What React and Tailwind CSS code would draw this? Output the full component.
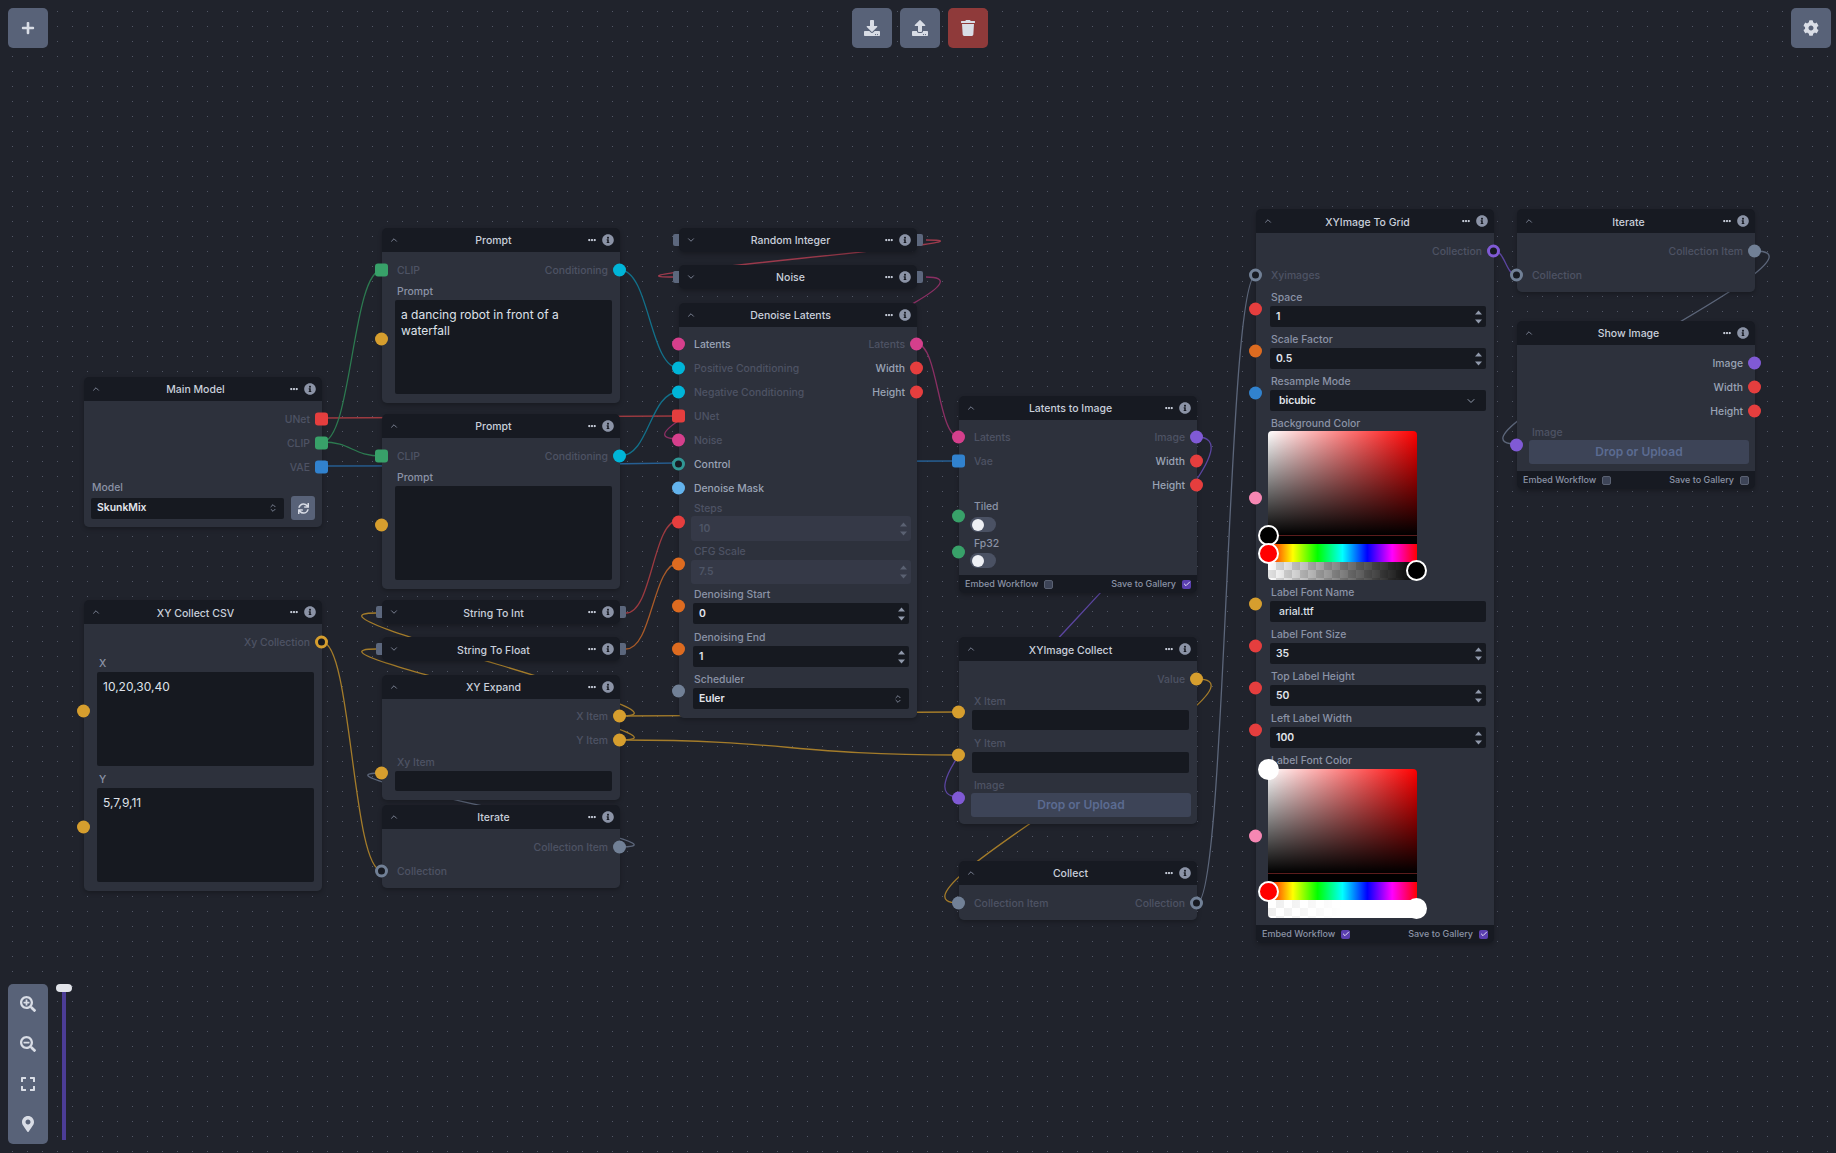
import React from 'react';
import clsx from 'clsx';
import { Check, ChevronDown, ChevronUp, ChevronsUpDown } from 'lucide-react';
import {
  FaCog,
  FaDownload,
  FaEllipsisH,
  FaExpand,
  FaInfoCircle,
  FaMapMarkerAlt,
  FaPlus,
  FaSearchMinus,
  FaSearchPlus,
  FaSync,
  FaTrash,
  FaUpload,
} from 'react-icons/fa';

const PINK = 'bg-[#d53f8c]';
const CYAN = 'bg-[#00b5d8]';
const RED = 'bg-[#e53e3e]';
const GREEN = 'bg-[#38a169]';
const BLUE = 'bg-[#3182ce]';
const ORANGE = 'bg-[#dd6b20]';
const YELLOW = 'bg-[#d69e2e]';
const PURPLE = 'bg-[#805ad5]';
const GRAY = 'bg-[#718096]';
const SKY = 'bg-[#63b3ed]';
const ROSE = 'bg-[#f687b3]';
const RING_GRAY = 'bg-[#171a22] border-[3px] border-[#718096]';
const RING_YELLOW = 'bg-[#171a22] border-[3px] border-[#d69e2e]';
const RING_PURPLE = 'bg-[#171a22] border-[3px] border-[#805ad5]';
const RING_TEAL = 'bg-[#171a22] border-[3px] border-[#319795]';

// same curve the node editor draws between two handles
function edgePath(sx, sy, tx, ty) {
  const d = tx - sx;
  const c = d >= 0 ? 0.5 * d : 6.25 * Math.sqrt(-d);
  return `M${sx},${sy} C${sx + c},${sy} ${tx - c},${ty} ${tx},${ty}`;
}

const EDGES = [
  [322, 418, 679, 416, '#9c3a40'],
  [322, 442, 382, 270, '#2c7a50'],
  [322, 442, 382, 456, '#2c7a50'],
  [322, 466, 959, 461, '#265f93'],
  [620, 270, 679, 368, '#12708a'],
  [620, 456, 679, 392, '#12708a'],
  [926, 240, 673, 277, '#9c3a4c'],
  [926, 277, 679, 439, '#8a2f63'],
  [917, 344, 959, 437, '#8a2f63'],
  [1197, 437, 959, 797, '#5b45a0'],
  [620, 716, 959, 712, '#a47c2a'],
  [620, 740, 959, 755, '#a47c2a'],
  [1197, 679, 959, 903, '#a47c2a'],
  [1197, 903, 1256, 275, '#5c667a'],
  [1494, 251, 1517, 275, '#5b45a0'],
  [1755, 251, 1517, 444, '#5c667a'],
  [322, 642, 382, 871, '#a47c2a'],
  [620, 847, 382, 773, '#5c667a'],
  [620, 716, 376, 613, '#a47c2a'],
  [620, 740, 376, 649, '#a47c2a'],
  [626, 613, 679, 520, '#9c3a40'],
  [626, 649, 679, 563, '#a85a28'],
];

function Handle({ side, color, square, className }) {
  return (
    <span
      className={clsx(
        'absolute z-10 size-[13px] -translate-y-1/2',
        side === 'left' ? '-left-[7px]' : '-right-[6px]',
        square ? 'rounded-[3px]' : 'rounded-full',
        color,
        className || 'top-1/2'
      )}
    />
  );
}

function Node({ className, title, collapsed, footer, children, bodyClass, titleClass }) {
  return (
    <div className={clsx('absolute w-[238px] rounded-[5px] shadow-[0_2px_4px_rgba(0,0,0,0.25)]', className)}>
      <div
        className={clsx(
          'relative flex h-6 items-center gap-1 bg-[#171a22] pl-[7px] pr-[6px]',
          collapsed ? 'rounded-[5px]' : 'rounded-t-[5px]'
        )}
      >
        {collapsed ? (
          <>
            <span className="absolute -left-[6px] top-[6px] h-3 w-[6px] rounded-l-[2px] bg-[#5c677d]" />
            <span className="absolute -right-[6px] top-[6px] h-3 w-[6px] rounded-r-[2px] bg-[#5c677d]" />
            <ChevronDown size={10} className="text-[#8b93a6]" />
          </>
        ) : (
          <ChevronUp size={10} className="text-[#8b93a6]" />
        )}
        <div className={clsx('flex-1 text-center text-[10.5px] font-medium text-[#c9cfdb]', titleClass || 'pt-[2px]')}>
          {title}
        </div>
        <FaEllipsisH size={8} className="text-[#c9cfdb]" />
        <FaInfoCircle size={12} className="ml-[2px] text-[#8b93a6]" />
      </div>
      {!collapsed && (
        <div className={clsx('bg-[#2d313c] pt-[6px]', footer ? '' : 'rounded-b-[5px]', bodyClass)}>{children}</div>
      )}
      {footer}
    </div>
  );
}

function Row({ left, right }) {
  return (
    <div className="relative flex h-6 items-center justify-between pl-[15px] pr-3 pt-[2px] text-[10.4px] font-medium">
      {left ? (
        <>
          <Handle side="left" color={left.color} square={left.square} />
          <span className={left.lit ? 'text-[#9aa3b5]' : 'text-[#4e5364]'}>{left.label}</span>
        </>
      ) : (
        <span />
      )}
      {right && (
        <>
          <span className={right.lit ? 'text-[#9aa3b5]' : 'text-[#4e5364]'}>{right.label}</span>
          <Handle side="right" color={right.color} square={right.square} />
        </>
      )}
    </div>
  );
}

function Field({ label, color, dim, labelClass, className, children }) {
  return (
    <div className={clsx('relative pl-[14px] pr-2', className)}>
      {color && <Handle side="left" color={color} className="top-[calc(50%+1px)]" />}
      <div
        className={clsx(
          'flex items-center pl-px pt-[2px] text-[10.4px] font-medium',
          labelClass || 'h-[18px]',
          dim ? 'text-[#4e5364]' : 'text-[#8b93a6]'
        )}
      >
        {label}
      </div>
      {children}
    </div>
  );
}

function Stepper({ dim }) {
  return (
    <svg width="7" height="15" viewBox="0 0 7 15" className="absolute right-1 top-1/2 -translate-y-1/2">
      <path d="M3.5 1 L7 5 L0 5 Z" fill={dim ? '#5a6172' : '#9099ab'} />
      <path d="M0 10 L7 10 L3.5 14 Z" fill={dim ? '#5a6172' : '#9099ab'} />
    </svg>
  );
}

function NumberInput({ value }) {
  return (
    <div className="relative flex h-[21px] items-center rounded-[2px] bg-[#161920] pl-[6px] text-[10.4px] font-semibold text-[#e2e5ec]">
      {value}
      <Stepper />
    </div>
  );
}

function DimInput({ value, className }) {
  return (
    <div
      className={clsx(
        '-mx-[2px] relative flex items-center rounded-[3px] bg-[#353947] pl-2 text-[10.4px] font-semibold text-[#4e5566]',
        className
      )}
    >
      {value}
      <Stepper dim />
    </div>
  );
}

function Select({ value, className, children }) {
  return (
    <div
      className={clsx(
        'flex items-center justify-between rounded-[2px] bg-[#161920] text-[10.4px] font-semibold text-[#e2e5ec]',
        className
      )}
    >
      {value}
      {children}
    </div>
  );
}

function TextArea({ children }) {
  return (
    <div className="-ml-px h-[94px] rounded-[2px] bg-[#161920] px-[6px] pt-[7px] text-[12px] leading-4 text-[#dfe2ea]">
      {children}
    </div>
  );
}

function Blank({ className }) {
  return <div className={clsx('-ml-px rounded-[2px] bg-[#161920]', className)} />;
}

function Upload() {
  return (
    <div className="-ml-[2px] -mr-[2px] flex h-6 items-center justify-center rounded-[3px] bg-[#3d4457] text-[12px] font-semibold text-[#5b6b91]">
      Drop or Upload
    </div>
  );
}

function Toggle() {
  return (
    <div className="-ml-[3px] flex h-[15px] w-[26px] items-center rounded-full bg-[#4a5163] pl-[2px]">
      <span className="size-3 rounded-full bg-[#eef0f5]" />
    </div>
  );
}

function Box({ on }) {
  return (
    <span
      className={clsx(
        'flex size-[9px] items-center justify-center rounded-[2px]',
        on ? 'bg-[#5b3fb0]' : 'border border-[#5a6172] bg-[#3d4457]'
      )}
    >
      {on && <Check size={8} strokeWidth={2.5} className="text-white" />}
    </span>
  );
}

function Footer({ embed, save }) {
  return (
    <div className="flex h-[18px] items-center justify-between rounded-b-[5px] bg-[#171a22] px-[6px] text-[9px] font-medium text-[#8b93a6]">
      <div className="flex items-center gap-[6px]">
        Embed Workflow <Box on={embed} />
      </div>
      <div className="flex items-center gap-[6px]">
        Save to Gallery <Box on={save} />
      </div>
    </div>
  );
}

function Picker({ alphaClass, alphaThumb, pickThumb }) {
  return (
    <div className="relative -ml-[2px] h-[149px] w-[149px]">
      <div className="h-[104px] rounded-t-[4px] bg-[linear-gradient(to_top,#000,transparent),linear-gradient(to_right,#fff,#f00)]" />
      <div className="h-[9px] border-t border-[#5a1c1c] bg-black" />
      <div className="h-[18px] bg-[linear-gradient(to_right,#f00,#ff0,#0f0,#0ff,#00f,#f0f,#f00)]" />
      <div className="h-[18px] rounded-b-[4px] bg-[repeating-conic-gradient(#e2e2e2_0_25%,#fff_0_50%)] bg-[size:16px_16px]">
        <div className={clsx('h-full rounded-b-[4px]', alphaClass)} />
      </div>
      <span className={clsx('absolute -left-[10px] size-[21px] rounded-full', pickThumb)} />
      <span className="absolute -left-[10px] top-[112px] size-[21px] rounded-full border-2 border-white bg-[#f00]" />
      <span className={clsx('absolute -right-[10px] top-[129px] size-[21px] rounded-full', alphaThumb)} />
    </div>
  );
}

function ToolButton({ className, children }) {
  return (
    <button className={clsx('flex size-10 items-center justify-center rounded-[5px] text-[#d9dde6]', className)}>
      {children}
    </button>
  );
}

function PromptNode({ className, text }) {
  return (
    <Node title="Prompt" className={className} bodyClass="pb-[9px]">
      <Row left={{ label: 'CLIP', color: GREEN, square: true }} right={{ label: 'Conditioning', color: CYAN }} />
      <Field label="Prompt" color={YELLOW}>
        <TextArea>{text}</TextArea>
      </Field>
    </Node>
  );
}

export default function App() {
  return (
    <div className="relative h-[1153px] w-[1836px] overflow-hidden bg-[#20232c] bg-[radial-gradient(#525766_0.7px,transparent_1px)] bg-[size:15px_15px] bg-[position:5px_4px] font-[Inter,sans-serif]">
      <svg className="absolute inset-0" width="1836" height="1153" fill="none">
        {EDGES.map(([sx, sy, tx, ty, color], i) => (
          <path key={i} d={edgePath(sx, sy, tx, ty)} stroke={color} strokeWidth="1.3" />
        ))}
      </svg>

      <Node title="Main Model" className="left-[84px] top-[377px]">
        <Row right={{ label: 'UNet', color: RED, square: true }} />
        <Row right={{ label: 'CLIP', color: GREEN, square: true }} />
        <Row right={{ label: 'VAE', color: BLUE, square: true }} />
        <div className="px-[7px] pb-[7px] pt-0">
          <div className="flex h-[17px] items-center pl-px text-[10.4px] font-medium text-[#8b93a6]">Model</div>
          <div className="flex items-center gap-[7px]">
            <Select value="SkunkMix" className="h-[21px] w-[194px] pl-[6px] pr-[6px]">
              <ChevronsUpDown size={10} className="text-[#8b93a6]" />
            </Select>
            <button className="flex size-6 items-center justify-center rounded-[3px] bg-[#586278] text-[#d9dde6]">
              <FaSync size={11} />
            </button>
          </div>
        </div>
      </Node>

      <PromptNode className="left-[382px] top-[228px]" text="a dancing robot in front of a waterfall" />
      <PromptNode className="left-[382px] top-[414px]" />

      <Node title="Random Integer" collapsed className="left-[679px] top-[228px]" />
      <Node title="Noise" collapsed className="left-[679px] top-[265px]" />

      <Node title="Denoise Latents" className="left-[679px] top-[303px]" bodyClass="pb-[9px] !pt-[5px]">
        <Row left={{ label: 'Latents', color: PINK, lit: true }} right={{ label: 'Latents', color: PINK }} />
        <Row left={{ label: 'Positive Conditioning', color: CYAN }} right={{ label: 'Width', color: RED, lit: true }} />
        <Row left={{ label: 'Negative Conditioning', color: CYAN }} right={{ label: 'Height', color: RED, lit: true }} />
        <Row left={{ label: 'UNet', color: RED, square: true }} />
        <Row left={{ label: 'Noise', color: PINK }} />
        <Row left={{ label: 'Control', color: RING_TEAL, lit: true }} />
        <Row left={{ label: 'Denoise Mask', color: SKY, lit: true }} />
        <Field label="Steps" dim color={RED} labelClass="h-4">
          <DimInput value="10" className="h-[25px]" />
        </Field>
        <Field label="CFG Scale" dim color={ORANGE} labelClass="h-[19px]">
          <DimInput value="7.5" className="h-6" />
        </Field>
        <Field label="Denoising Start" color={ORANGE} className="mt-[1px]">
          <NumberInput value="0" />
        </Field>
        <Field label="Denoising End" color={ORANGE} className="mt-1">
          <NumberInput value="1" />
        </Field>
        <Field label="Scheduler" color={GRAY} className="mt-[3px]">
          <Select value="Euler" className="h-[21px] pl-[6px] pr-[6px]">
            <ChevronsUpDown size={10} className="text-[#8b93a6]" />
          </Select>
        </Field>
      </Node>

      <Node
        title="Latents to Image"
        className="left-[959px] top-[396px]"
        bodyClass="!pt-[5px] pb-[7px]"
        footer={<Footer save />}
      >
        <Row left={{ label: 'Latents', color: PINK }} right={{ label: 'Image', color: PURPLE }} />
        <Row left={{ label: 'Vae', color: BLUE, square: true }} right={{ label: 'Width', color: RED, lit: true }} />
        <Row right={{ label: 'Height', color: RED, lit: true }} />
        <Field label="Tiled" color={GREEN}>
          <div className="pt-[2px]">
            <Toggle />
          </div>
        </Field>
        <Field label="Fp32" color={GREEN} className="mt-[2px]">
          <div className="pt-px">
            <Toggle />
          </div>
        </Field>
      </Node>

      <Node title="XYImage Collect" titleClass="pt-[4px]" className="left-[959px] top-[637px]" bodyClass="pb-[7px]">
        <Row right={{ label: 'Value', color: YELLOW }} />
        <Field label="X Item" dim color={YELLOW} labelClass="h-[19px]">
          <Blank className="h-5" />
        </Field>
        <Field label="Y Item" dim color={YELLOW} className="mt-1">
          <Blank className="h-[21px]" />
        </Field>
        <Field label="Image" dim color={PURPLE} labelClass="h-[17px]" className="mt-[3px]">
          <Upload />
        </Field>
      </Node>

      <Node title="Collect" className="left-[959px] top-[861px]" bodyClass="pb-[5px]">
        <Row left={{ label: 'Collection Item', color: GRAY }} right={{ label: 'Collection', color: RING_GRAY }} />
      </Node>

      <Node title="XY Collect CSV" titleClass="pt-[4px]" className="left-[84px] top-[600px]" bodyClass="pb-[9px]">
        <Row right={{ label: 'Xy Collection', color: RING_YELLOW }} />
        <Field label="X" color={YELLOW}>
          <TextArea>10,20,30,40</TextArea>
        </Field>
        <Field label="Y" color={YELLOW} className="mt-1">
          <TextArea>5,7,9,11</TextArea>
        </Field>
      </Node>

      <Node title="String To Int" titleClass="pt-[4px]" collapsed className="left-[382px] top-[600px]" />
      <Node title="String To Float" titleClass="pt-[4px]" collapsed className="left-[382px] top-[637px]" />

      <Node title="XY Expand" className="left-[382px] top-[675px]" bodyClass="!pt-[5px] pb-[9px]">
        <Row right={{ label: 'X Item', color: YELLOW }} />
        <Row right={{ label: 'Y Item', color: YELLOW }} />
        <Field label="Xy Item" dim color={YELLOW} labelClass="h-[19px]">
          <Blank className="h-5" />
        </Field>
      </Node>

      <Node title="Iterate" className="left-[382px] top-[805px]" bodyClass="pb-[5px]">
        <Row right={{ label: 'Collection Item', color: GRAY }} />
        <Row left={{ label: 'Collection', color: RING_GRAY }} />
      </Node>

      <Node
        title="XYImage To Grid"
        titleClass="pt-[4px]"
        className="left-[1256px] top-[209px]"
        bodyClass="pb-[7px]"
        footer={<Footer embed save />}
      >
        <Row right={{ label: 'Collection', color: RING_PURPLE }} />
        <Row left={{ label: 'Xyimages', color: RING_GRAY }} />
        <div className="mt-px flex flex-col gap-[3px]">
          <Field label="Space" color={RED}>
            <NumberInput value="1" />
          </Field>
          <Field label="Scale Factor" color={ORANGE}>
            <NumberInput value="0.5" />
          </Field>
          <Field label="Resample Mode" color={BLUE}>
            <Select value="bicubic" className="h-[21px] pl-[9px] pr-[9px]">
              <ChevronDown size={12} className="text-[#9099ab]" />
            </Select>
          </Field>
          <Field label="Background Color" color={ROSE} labelClass="h-[17px]">
            <Picker
              alphaClass="bg-[linear-gradient(to_right,transparent,#000)]"
              alphaThumb="border-2 border-white bg-black"
              pickThumb="top-[94px] border-2 border-white bg-black"
            />
          </Field>
          <Field label="Label Font Name" color={YELLOW}>
            <div className="flex h-[21px] items-center rounded-[2px] bg-[#161920] pl-[9px] text-[10.4px] font-medium text-[#dfe2ea]">
              arial.ttf
            </div>
          </Field>
          <Field label="Label Font Size" color={RED}>
            <NumberInput value="35" />
          </Field>
          <Field label="Top Label Height" color={RED}>
            <NumberInput value="50" />
          </Field>
          <Field label="Left Label Width" color={RED}>
            <NumberInput value="100" />
          </Field>
          <Field label="Label Font Color" color={ROSE}>
            <Picker
              alphaClass="bg-[linear-gradient(to_right,rgba(255,255,255,0.4),#fff_50%)]"
              alphaThumb="bg-white"
              pickThumb="-top-[10px] bg-white"
            />
          </Field>
        </div>
      </Node>

      <Node title="Iterate" titleClass="pt-[4px]" className="left-[1517px] top-[209px]" bodyClass="pb-[5px]">
        <Row right={{ label: 'Collection Item', color: GRAY }} />
        <Row left={{ label: 'Collection', color: RING_GRAY }} />
      </Node>

      <Node title="Show Image" className="left-[1517px] top-[321px]" bodyClass="pb-[7px]" footer={<Footer />}>
        <Row right={{ label: 'Image', color: PURPLE, lit: true }} />
        <Row right={{ label: 'Width', color: RED, lit: true }} />
        <Row right={{ label: 'Height', color: RED, lit: true }} />
        <Field label="Image" dim color={PURPLE} labelClass="h-[17px]">
          <Upload />
        </Field>
      </Node>

      <ToolButton className="absolute left-2 top-2 bg-[#586278]">
        <FaPlus size={14} />
      </ToolButton>

      <div className="absolute left-[852px] top-2 flex gap-2">
        <ToolButton className="bg-[#586278]">
          <FaDownload size={16} />
        </ToolButton>
        <ToolButton className="bg-[#586278]">
          <FaUpload size={16} />
        </ToolButton>
        <ToolButton className="bg-[#8f3a3a]">
          <FaTrash size={16} />
        </ToolButton>
      </div>

      <ToolButton className="absolute right-[5px] top-2 bg-[#586278]">
        <FaCog size={16} />
      </ToolButton>

      <div className="absolute left-2 top-[984px] flex h-[160px] items-stretch gap-2">
        <div className="flex w-10 flex-col items-center justify-around rounded-[5px] bg-[#586278] text-[#d9dde6]">
          <FaSearchPlus size={16} />
          <FaSearchMinus size={16} />
          <FaExpand size={16} />
          <FaMapMarkerAlt size={16} />
        </div>
        <div className="relative h-[156px] w-4">
          <div className="mx-auto h-full w-1 bg-[#4c3d96]" />
          <span className="absolute left-0 top-0 h-2 w-4 rounded-full bg-[#e2e4ea]" />
        </div>
      </div>
    </div>
  );
}
